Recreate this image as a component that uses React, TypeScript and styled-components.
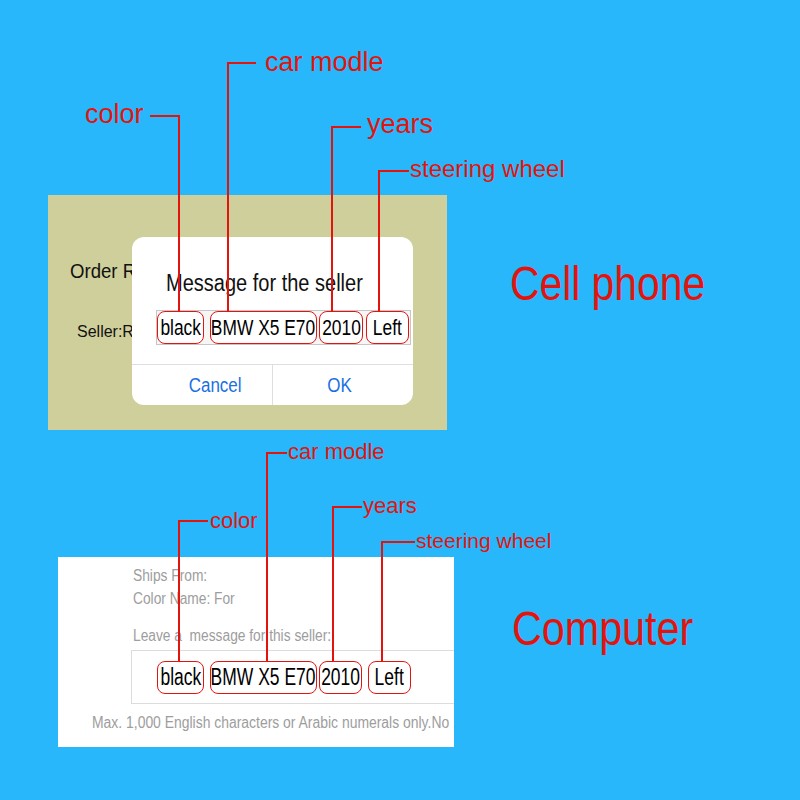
import React from 'react'
import styled, { createGlobalStyle } from 'styled-components'

const GlobalStyle = createGlobalStyle`
  html, body {
    margin: 0;
    padding: 0;
    background: #28b7fb;
  }
  body {
    font-family: 'Liberation Sans', Arial, sans-serif;
  }
`

const RED = '#e3140e'

const Canvas = styled.div`
  position: relative;
  width: 800px;
  height: 800px;
  overflow: hidden;
  background: #28b7fb;
  display: flex;
  flex-direction: column;
`

const Row = styled.section<{ $top: number; $left: number; $gap: number; $height: number }>`
  display: flex;
  align-items: flex-start;
  height: ${(p) => p.$height}px;
  box-sizing: border-box;
  padding: ${(p) => p.$top}px 0 0 ${(p) => p.$left}px;
  gap: ${(p) => p.$gap}px;
`

const Heading = styled.h2<{ $offset: number }>`
  margin: ${(p) => p.$offset}px 0 0;
  font-size: 48px;
  line-height: 1;
  font-weight: 400;
  color: ${RED};
  white-space: nowrap;
`

// text squeezed sideways, the way the captured page renders it
const Narrow = styled.span<{ $sx: number; $origin?: string }>`
  display: inline-block;
  white-space: nowrap;
  transform: scaleX(${(p) => p.$sx});
  transform-origin: ${(p) => p.$origin ?? 'left'} center;
`

/* ---------- phone ---------- */

const PhonePanel = styled.div`
  position: relative;
  width: 399px;
  height: 235px;
  background: #cfcf9b;
  overflow: hidden;
  display: flex;
  flex-direction: column;
  padding: 66px 0 0 22px;
  box-sizing: border-box;
`

const OrderTitle = styled.div`
  font-size: 20px;
  line-height: 1;
  color: #111;
`

const SellerLine = styled.div`
  margin: 43px 0 0 7px;
  font-size: 16px;
  line-height: 1;
  color: #111;
`

const Dialog = styled.div`
  position: absolute;
  left: 84px;
  top: 42px;
  width: 281px;
  height: 168px;
  background: #fff;
  border-radius: 12px;
  display: flex;
  flex-direction: column;
  overflow: hidden;
`

const DialogTitle = styled.div`
  margin: 35px 0 0 34px;
  font-size: 23px;
  line-height: 1;
  color: #111;
`

const ChipBox = styled.div<{ $width: number; $height: number; $padX: number; $padY: number }>`
  display: flex;
  align-items: flex-start;
  width: ${(p) => p.$width}px;
  height: ${(p) => p.$height}px;
  box-sizing: border-box;
  padding: ${(p) => p.$padY}px 0 0 ${(p) => p.$padX}px;
  flex-shrink: 0;
`

const PhoneInput = styled(ChipBox)`
  margin: 15px 0 0 24px;
  border: 1px solid #c6c6c6;
  background: #f6f6f6;
`

const Chip = styled.div<{ $w: number; $ml: number; $size: number }>`
  display: flex;
  align-items: center;
  justify-content: center;
  width: ${(p) => p.$w}px;
  height: 33px;
  margin-left: ${(p) => p.$ml}px;
  box-sizing: border-box;
  border: 1px solid ${RED};
  border-radius: 8px;
  background: #fff;
  font-size: ${(p) => p.$size}px;
  line-height: 1;
  color: #000;
  flex-shrink: 0;
`

const ButtonBar = styled.div`
  margin-top: 19px;
  display: grid;
  grid-template-columns: 140px 1fr;
  height: 40px;
  border-top: 1px solid #dedede;
`

const DialogButton = styled.button<{ $pl: number; $pr: number }>`
  all: unset;
  display: flex;
  align-items: center;
  justify-content: center;
  padding: 0 ${(p) => p.$pr}px 0 ${(p) => p.$pl}px;
  font-family: 'Liberation Sans', Arial, sans-serif;
  font-size: 20px;
  line-height: 1;
  color: #1a6fe3;
  & + & {
    border-left: 1px solid #dedede;
  }
`

/* ---------- computer ---------- */

const DeskPanel = styled.div`
  width: 396px;
  height: 190px;
  background: #fff;
  overflow: hidden;
  box-sizing: border-box;
  padding-left: 34px;
  display: flex;
  flex-direction: column;
`

const FormBlock = styled.div`
  padding-left: 41px;
  display: flex;
  flex-direction: column;
`

const GreyLine = styled.div<{ $mt?: number }>`
  margin-top: ${(p) => p.$mt ?? 0}px;
  font-size: 16px;
  line-height: 23px;
  color: #9d9d9d;
  white-space: nowrap;
`

const DeskInput = styled(ChipBox)`
  margin: 3px 0 0 -2px;
  border: 1px solid #dcdcdc;
`

const Hint = styled.div`
  margin-top: 11px;
  font-size: 16px;
  line-height: 1;
  color: #9d9d9d;
  white-space: nowrap;
`

/* ---------- callouts ---------- */

const NoteLayer = styled.div`
  position: absolute;
  inset: 0;
  pointer-events: none;
`

const NoteLines = styled.svg`
  position: absolute;
  left: 0;
  top: 0;
`

const NoteLabel = styled.span<{ $x: number; $y: number; $size: number }>`
  position: absolute;
  left: ${(p) => p.$x}px;
  top: ${(p) => p.$y}px;
  font-size: ${(p) => p.$size}px;
  line-height: 1;
  color: ${RED};
  white-space: nowrap;
`

type Note = { label: string; x: number; y: number; size: number; path: string }

const notes: Note[] = [
  { label: 'color', x: 85, y: 101, size: 27, path: 'M150 116H179V312' },
  { label: 'car modle', x: 265, y: 49, size: 27, path: 'M256 63H228V312' },
  { label: 'years', x: 367, y: 111, size: 27, path: 'M361 127H332V312' },
  { label: 'steering wheel', x: 410, y: 157, size: 24, path: 'M409 171H379V312' },
  { label: 'color', x: 210, y: 510, size: 22, path: 'M208 521H179V661' },
  { label: 'car modle', x: 288, y: 441, size: 22, path: 'M287 453H267V661' },
  { label: 'years', x: 363, y: 495, size: 22, path: 'M362 507H333V661' },
  { label: 'steering wheel', x: 416, y: 530, size: 21, path: 'M415 542H382V661' },
]

type ChipData = { text: string; w: number; ml: number }

const phoneChips: ChipData[] = [
  { text: 'black', w: 47, ml: 0 },
  { text: 'BMW X5 E70', w: 107, ml: 6 },
  { text: '2010', w: 44, ml: 2 },
  { text: 'Left', w: 43, ml: 3 },
]

const deskChips: ChipData[] = [
  { text: 'black', w: 47, ml: 0 },
  { text: 'BMW X5 E70', w: 107, ml: 6 },
  { text: '2010', w: 43, ml: 2 },
  { text: 'Left', w: 43, ml: 6 },
]

const Chips = ({ items, size, sx }: { items: ChipData[]; size: number; sx: number }) => (
  <>
    {items.map((c) => (
      <Chip key={c.text} $w={c.w} $ml={c.ml} $size={size}>
        <Narrow $sx={sx} $origin="center">
          {c.text}
        </Narrow>
      </Chip>
    ))}
  </>
)

export default function App() {
  return (
    <>
      <GlobalStyle />
      <Canvas>
        <Row $top={195} $left={48} $gap={63} $height={430}>
          <PhonePanel>
            <OrderTitle>
              <Narrow $sx={0.93}>Order Review</Narrow>
            </OrderTitle>
            <SellerLine>Seller:Rosie</SellerLine>
            <Dialog>
              <DialogTitle>
                <Narrow $sx={0.87}>Message for the seller</Narrow>
              </DialogTitle>
              <PhoneInput $width={255} $height={35} $padX={0} $padY={0}>
                <Chips items={phoneChips} size={22} sx={0.79} />
              </PhoneInput>
              <ButtonBar>
                <DialogButton $pl={26} $pr={0}>
                  <Narrow $sx={0.85} $origin="center">Cancel</Narrow>
                </DialogButton>
                <DialogButton $pl={0} $pr={8}>
                  <Narrow $sx={0.85} $origin="center">OK</Narrow>
                </DialogButton>
              </ButtonBar>
            </Dialog>
          </PhonePanel>
          <Heading $offset={65}>
            <Narrow $sx={0.85}>Cell phone</Narrow>
          </Heading>
        </Row>

        <Row $top={127} $left={58} $gap={58} $height={370}>
          <DeskPanel>
            <FormBlock>
              <GreyLine $mt={7}>
                <Narrow $sx={0.86}>Ships From:</Narrow>
              </GreyLine>
              <GreyLine>
                <Narrow $sx={0.86}>Color Name: For</Narrow>
              </GreyLine>
              <GreyLine $mt={14}>
                <Narrow $sx={0.86}>Leave a&nbsp; message for this seller:</Narrow>
              </GreyLine>
              <DeskInput $width={400} $height={54} $padX={25} $padY={10}>
                <Chips items={deskChips} size={23} sx={0.76} />
              </DeskInput>
            </FormBlock>
            <Hint>
              <Narrow $sx={0.87}>
                Max. 1,000 English characters or Arabic numerals only.No
              </Narrow>
            </Hint>
          </DeskPanel>
          <Heading $offset={48}>
            <Narrow $sx={0.86}>Computer</Narrow>
          </Heading>
        </Row>

        <NoteLayer>
          <NoteLines width={800} height={800} viewBox="0 0 800 800">
            {notes.map((n) => (
              <path key={n.path} d={n.path} fill="none" stroke={RED} strokeWidth={2} />
            ))}
          </NoteLines>
          {notes.map((n) => (
            <NoteLabel key={n.path} $x={n.x} $y={n.y} $size={n.size}>
              {n.label}
            </NoteLabel>
          ))}
        </NoteLayer>
      </Canvas>
    </>
  )
}
